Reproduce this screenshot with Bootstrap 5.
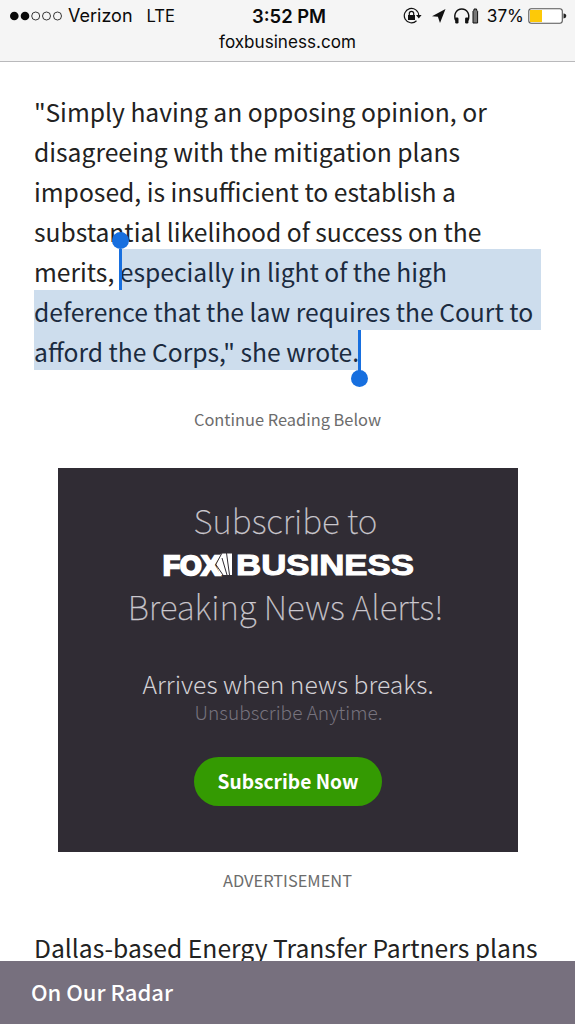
<!DOCTYPE html>
<html lang="en">
<head>
<meta charset="utf-8">
<meta name="viewport" content="width=device-width, initial-scale=1">
<title>foxbusiness.com</title>
<link href="https://cdn.jsdelivr.net/npm/bootstrap@5.3.0/dist/css/bootstrap.min.css" rel="stylesheet">
<style>
  body { font-family: "Noto Sans CJK SC", "Noto Sans", sans-serif; color: #222; height: 1024px; }
  .phone-head { height: 62px; background: #f5f5f5; border-bottom: 1px solid #b9b9bb; font-family: Inter, "Liberation Sans", sans-serif; color: #0a0a0a; }
  .status-row { height: 32px; padding: 0 8px 0 9px; font-size: 18px; line-height: 32px; }
  .carrier { margin-left: 5px; }
  .net { font-size: 16.6px; margin-left: 14px; }
  .charge { font-size: 17.2px; margin: 0 4px 0 8px; }
  .clock { left: 252px; top: 0; font-weight: 600; white-space: nowrap; font-size: 18.4px; line-height: 32px; }
  .site-url { font-size: 17.1px; line-height: 20px; }
  .story { padding: 28px 34px 0; font-size: 24.66px; }
  .story-line { height: 40px; line-height: 42px; white-space: nowrap; }
  .picked { background: #cddded; color: #1b2b40; }
  .l5 .picked { margin-top: -1px; padding-top: 1px; height: 41px; }
  .grip { width: 3px; height: 41px; background: #176fdf; }
  .grip::after { content: ""; position: absolute; left: -7px; width: 17px; height: 17px; border-radius: 50%; background: #176fdf; }
  .grip-start { left: 0; top: 0; margin-left: -1px; }
  .grip-start::after { top: -17px; }
  .grip-end { left: 100%; top: 0; margin-left: -1px; }
  .grip-end::after { top: 40px; }
  .note { font-size: 16.4px; line-height: 24px; color: #6c6c6c; }
  .n1 { margin: 37px 0; }
  .n2 { margin: 16px 0 34px; }
  .promo { width: 460px; height: 384px; background: #302c34; white-space: nowrap; padding-top: 30px; }
  .promo-big { font-size: 33.4px; line-height: 44px; font-weight: 100; color: #cbc8ce; padding-right: 4px; -webkit-text-stroke: .25px #cbc8ce; }
  .logo { margin: 10px 0 8px; overflow: visible; }
  .promo-mid { font-size: 24.7px; line-height: 30px; font-weight: 300; color: #d3d1d6; margin-top: 40px; padding-left: 1px; }
  .promo-tiny { font-size: 19.1px; line-height: 28px; font-weight: 300; color: #77737e; padding-left: 2px; }
  .promo-btn { width: 188px; height: 49px; background: #349a02; font-size: 19.2px; font-weight: 700; color: #fff; border: 0; padding: 0; margin-top: 31px; margin-left: 1px; }
  .radar { height: 63px; background: #77707e; color: #fff; font-size: 22px; font-weight: 500; padding: 0 0 2px 31px; }
</style>
</head>
<body class="bg-white overflow-hidden d-flex flex-column position-relative">
<header class="phone-head flex-shrink-0 position-relative">
  <div class="status-row d-flex align-items-center">
    <svg width="54" height="12" viewBox="0 0 54 12"><g fill="#0a0a0a"><circle cx="5.3" cy="6" r="4.3"/><circle cx="16" cy="6" r="4.3"/></g><g fill="none" stroke="#222" stroke-width=".9"><circle cx="26.7" cy="6" r="4"/><circle cx="37.5" cy="6" r="4"/><circle cx="48.500" cy="6" r="4"/></g></svg>
    <span class="carrier">Verizon</span><span class="net">LTE</span>
    <div class="ms-auto d-flex align-items-center">
      <svg width="76" height="20" viewBox="0 0 76 20">
        <g fill="none" stroke="#111" stroke-width="1.2"><path d="M13.500 14.800A7.200 7.200 0 1 1 15.700 9.500"/><path d="M6.300 9V7.500a2.200 2.200 0 0 1 4.400 0V9"/></g>
        <path d="M5 8.900h7v5H5zM13 9h5.600l-2.800 3.600z" fill="#111"/>
        <path d="M42.500 3 37 17l-2.100-6.300L29 10.300z" fill="#111"/>
        <path d="M52.800 14.500C50 8.500 53.500 3 58.800 3s8.800 5.500 6 11.500" fill="none" stroke="#111" stroke-width="1.500"/>
        <rect x="52.200" y="11.500" width="3.300" height="6" rx="1.200" fill="#111"/><rect x="62.100" y="11.500" width="3.300" height="6" rx="1.200" fill="#111"/>
        <path d="M70 17V5.200l1-1V3h2.600v1.200l1 1V17z" fill="#777" stroke="#111"/>
      </svg>
      <span class="charge">37%</span>
      <svg width="39" height="16" viewBox="0 0 39 16"><rect x=".8" y=".8" width="33.500" height="14.400" rx="2.500" fill="#fff" stroke="#555" stroke-width="1.100"/><path d="M2 2h12v12H2z" fill="#fdc908"/><path d="M35.500 5.500q2.800.3 2.800 2.500t-2.800 2.500z" fill="#222"/></svg>
    </div>
  </div>
  <div class="clock position-absolute">3:52 PM</div>
  <div class="site-url text-center">foxbusiness.com</div>
</header>

<main class="story flex-shrink-0">
  <div class="story-line l1">"Simply having an opposing opinion, or</div>
  <div class="story-line l2">disagreeing with the mitigation plans</div>
  <div class="story-line l3">imposed, is insufficient to establish a</div>
  <div class="story-line l4">substantial likelihood of success on the</div>
  <div class="story-line l5 d-flex"><span class="lead-in">merits,&nbsp;</span><div class="picked flex-grow-1 position-relative">especially in light of the high<i class="grip grip-start position-absolute"></i></div></div>
  <div class="story-line l6 picked">deference that the law requires the Court to</div>
  <div class="d-flex"><div class="story-line l7 picked position-relative">afford the Corps," she wrote.<i class="grip grip-end position-absolute"></i></div></div>
  <div class="note n1 text-center">Continue Reading Below</div>
  <section class="promo mx-auto d-flex flex-column align-items-center">
    <div class="promo-big b1">Subscribe to</div>
    <svg class="logo" width="252" height="24" viewBox="0 0 252 24" fill="#fff" font-family="'Liberation Sans', sans-serif" font-weight="700">
      <text x="1" y="22.500" font-size="28.500" textLength="57" lengthAdjust="spacingAndGlyphs" stroke="#fff" stroke-width="2.400">FOX</text>
      <path d="M54 12 59 1.500 70 1.500v21.500H58z"/>
      <path d="M53.500 12 61 23M60 6l5 17M64.500 1l3 22M54 12 60 1" fill="none" stroke="#302c34" stroke-width="1"/>
      <text x="74" y="22.500" font-size="29" textLength="178" lengthAdjust="spacingAndGlyphs" stroke="#fff" stroke-width="1">BUSINESS</text>
    </svg>
    <div class="promo-big b2">Breaking News Alerts!</div>
    <div class="promo-mid">Arrives when news breaks.</div>
    <div class="promo-tiny">Unsubscribe Anytime.</div>
    <button class="promo-btn btn rounded-pill">Subscribe Now</button>
  </section>
  <div class="note n2 text-center">ADVERTISEMENT</div>
  <div class="story-line l8">Dallas-based Energy Transfer Partners plans</div>
</main>
<footer class="radar position-absolute bottom-0 start-0 w-100 d-flex align-items-center">On Our Radar</footer>
<script src="https://cdn.jsdelivr.net/npm/bootstrap@5.3.0/dist/js/bootstrap.bundle.min.js"></script>
</body>
</html>
